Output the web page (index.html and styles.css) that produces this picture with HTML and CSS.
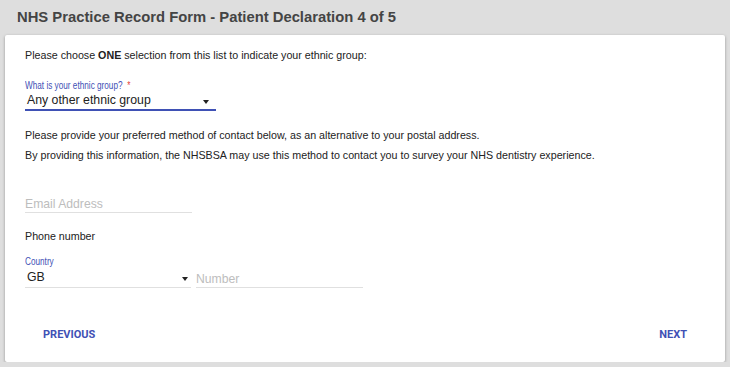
FILE: index.html
```html
<!DOCTYPE html>
<html>
    <head>
        <title>NHS Practice Record Form</title>
        <link rel="stylesheet" href="styles.css">
    </head>
    <body>
        <div class="page">
            <h1 class="heading">NHS Practice Record Form - Patient Declaration 4 of 5</h1>
            <div class="card">
                <p class="intro">Please choose <b>ONE</b> selection from this list to indicate your ethnic group:</p>
                <div class="field ethnic">
                    <label class="fieldLabel">What is your ethnic group? <span class="req">*</span></label>
                    <div class="selectBox focused">
                        <span class="value">Any other ethnic group</span>
                        <span class="arrow"></span>
                    </div>
                </div>
                <div class="contactText">
                    <p>Please provide your preferred method of contact below, as an alternative to your postal address.</p>
                    <p>By providing this information, the NHSBSA may use this method to contact you to survey your NHS dentistry experience.</p>
                </div>
                <div class="field email">
                    <input type="text" class="textInput" placeholder="Email Address">
                </div>
                <div class="phoneTitle">Phone number</div>
                <div class="phoneRow">
                    <div class="field country">
                        <label class="fieldLabel">Country</label>
                        <div class="selectBox">
                            <span class="value">GB</span>
                            <span class="arrow"></span>
                        </div>
                    </div>
                    <div class="field number">
                        <input type="text" class="textInput" placeholder="Number">
                    </div>
                </div>
                <div class="actions">
                    <button class="navBtn">PREVIOUS</button>
                    <button class="navBtn">NEXT</button>
                </div>
            </div>
        </div>
    </body>
</html>
```

FILE: styles.css
```css
*{
    margin: 0;
    padding: 0;
    box-sizing: border-box;
}
body{
    background: #dedede;
    font-family: "Liberation Sans", Arial, sans-serif;
    color: #222;
}
.page{
    padding: 0 5px;
}
.heading{
    font-size: 14.8px;
    font-weight: bold;
    color: #444;
    height: 35px;
    line-height: 18px;
    padding: 8px 0 0 12px;
}
.card{
    background: #fff;
    box-shadow: 0 1px 3px rgba(0,0,0,0.35);
    border-radius: 2px;
    padding: 13px 20px 0 20px;
    height: 327px;
}
.intro{
    font-size: 10.7px;
    line-height: 14px;
}
.ethnic{
    margin-top: 18px;
    width: 191px;
}
.fieldLabel{
    display: block;
    font-size: 10px;
    line-height: 11px;
    color: #3f51b5;
    white-space: nowrap;
    transform: scaleX(0.82);
    transform-origin: left center;
}
.req{
    color: #e53935;
    margin-left: 3px;
}
.selectBox{
    display: flex;
    align-items: center;
    justify-content: space-between;
    height: 22px;
    border-bottom: 1px solid #e0e0e0;
    padding: 0 7px 0 2px;
}
.ethnic .selectBox{
    height: 20px;
}
.selectBox.focused{
    border-bottom: 2px solid #3f51b5;
}
.value{
    font-size: 12.3px;
    color: #222;
}
.arrow{
    width: 0;
    height: 0;
    border-left: 3.5px solid transparent;
    border-right: 3.5px solid transparent;
    border-top: 4px solid #222;
    margin-top: 3px;
}
.contactText{
    margin-top: 14px;
    font-size: 10.7px;
    line-height: 20px;
}
.email{
    margin-top: 24px;
    width: 167px;
}
.textInput{
    display: block;
    width: 100%;
    border: none;
    border-bottom: 1px solid #e0e0e0;
    font-family: "Liberation Sans", Arial, sans-serif;
    font-size: 12.2px;
    height: 24px;
    padding-top: 6px;
    outline: none;
    background: transparent;
}
.textInput::placeholder{
    color: #bdbdbd;
}
.phoneTitle{
    margin-top: 16px;
    font-size: 10.7px;
    line-height: 14px;
}
.phoneRow{
    margin-top: 13px;
    display: flex;
    align-items: flex-end;
    gap: 5px;
}
.country{
    width: 166px;
}
.country .selectBox{
    padding: 0 3px 0 2px;
    height: 21px;
}
.number{
    width: 167px;
}
.actions{
    margin-top: 40px;
    display: flex;
    justify-content: space-between;
    padding: 0 18px;
}
.navBtn{
    border: none;
    background: none;
    font-family: Roboto, "Liberation Sans", sans-serif;
    font-size: 11px;
    line-height: 14px;
    font-weight: bold;
    color: #3f51b5;
}
```
